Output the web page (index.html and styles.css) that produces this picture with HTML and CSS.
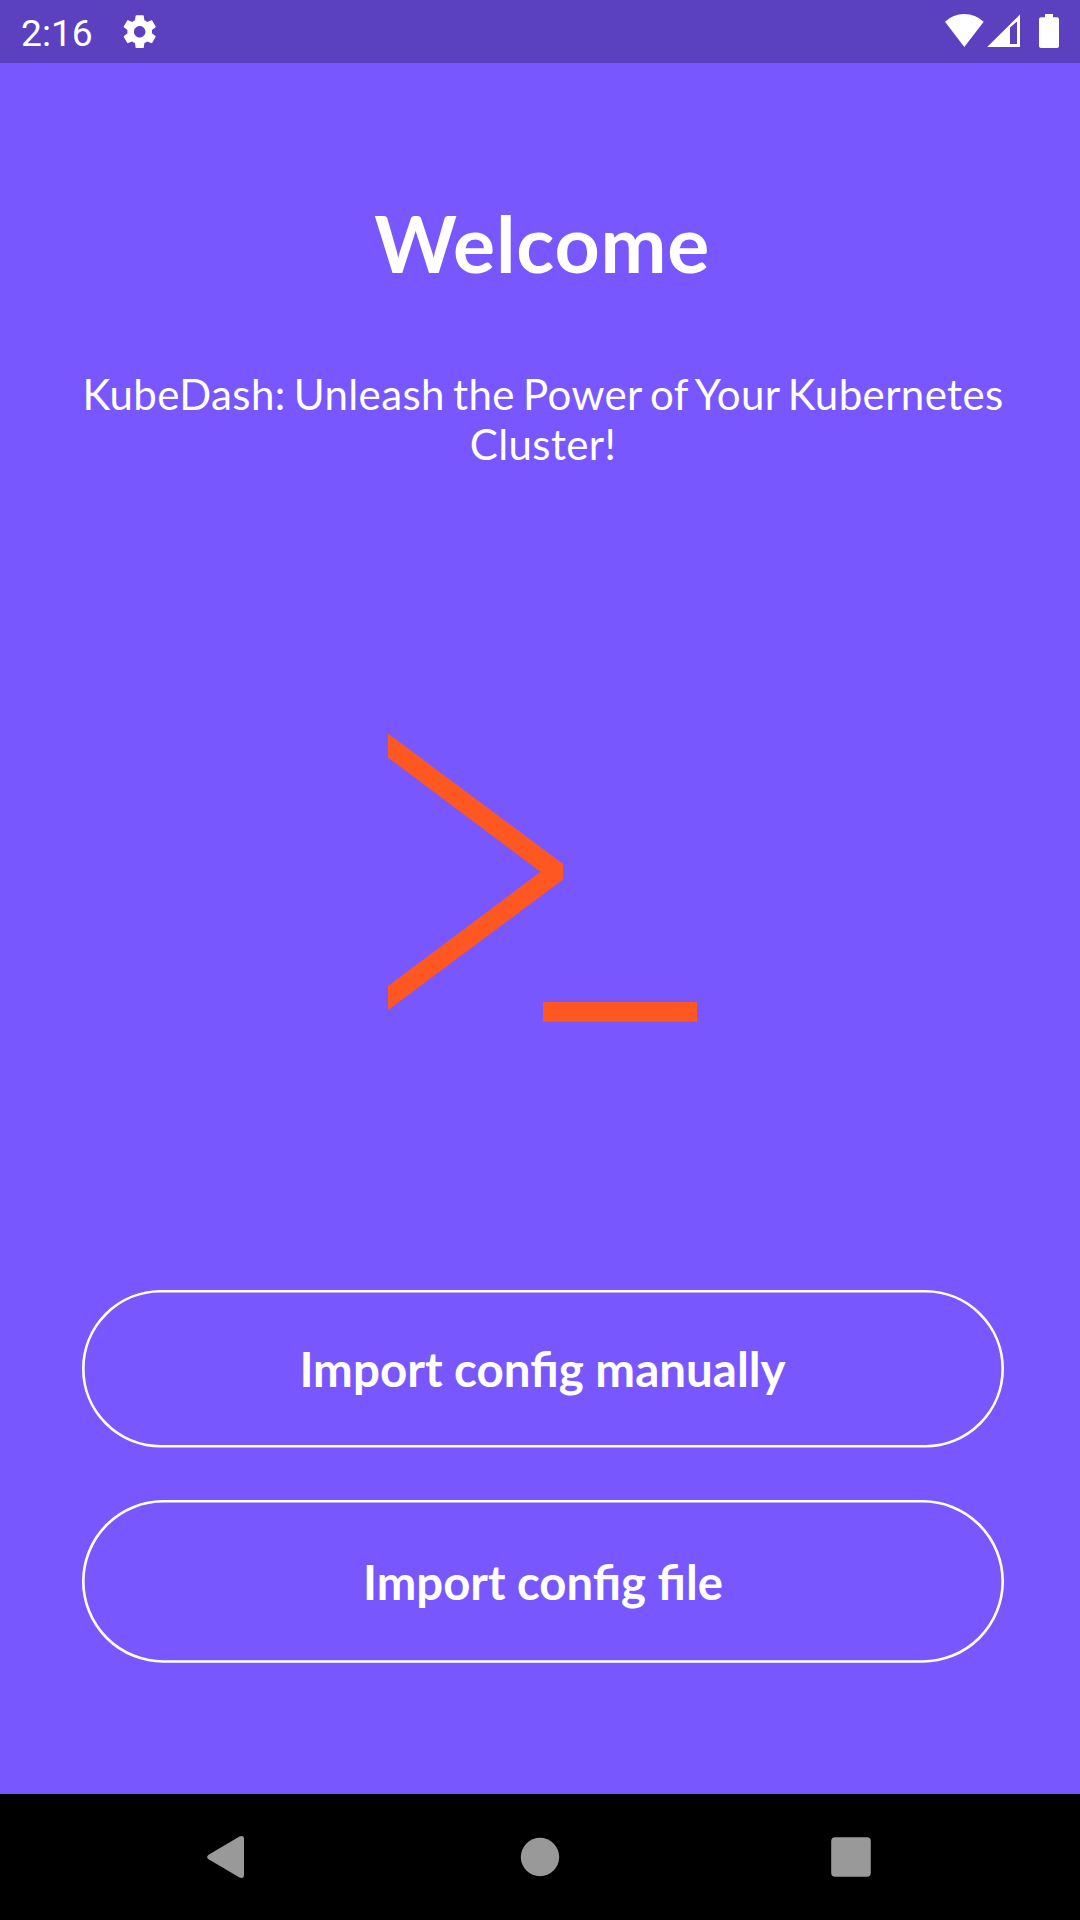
FILE: index.html
```html
<!DOCTYPE html>
<html lang="en">
<head>
<meta charset="utf-8">
<title>KubeDash</title>
<link rel="stylesheet" href="styles.css">
</head>
<body>
<div class="screen">
  <header class="status-bar">
    <span class="clock">2:16</span>
    <svg class="gear" viewBox="0 0 24 24"><path d="M19.43 12.98c.04-.32.07-.64.07-.98s-.03-.66-.07-.98l2.11-1.65c.19-.15.24-.42.12-.64l-2-3.46c-.12-.22-.39-.3-.61-.22l-2.49 1c-.52-.4-1.08-.73-1.69-.98l-.38-2.65C14.46 2.18 14.25 2 14 2h-4c-.25 0-.46.18-.49.42l-.38 2.65c-.61.25-1.17.59-1.69.98l-2.49-1c-.23-.09-.49 0-.61.22l-2 3.46c-.13.22-.07.49.12.64l2.11 1.65c-.04.32-.07.65-.07.98s.03.66.07.98l-2.11 1.65c-.19.15-.24.42-.12.64l2 3.46c.12.22.39.3.61.22l2.49-1c.52.4 1.08.73 1.69.98l.38 2.65c.03.24.24.42.49.42h4c.25 0 .46-.18.49-.42l.38-2.65c.61-.25 1.17-.59 1.69-.98l2.49 1c.23.09.49 0 .61-.22l2-3.46c.12-.22.07-.49-.12-.64l-2.11-1.65zM12 15.5c-1.93 0-3.5-1.57-3.5-3.5s1.57-3.5 3.5-3.5 3.5 1.57 3.5 3.5-1.57 3.5-3.5 3.5z"/></svg>
    <svg class="indicators" viewBox="0 0 116 36">
      <path d="M1 9.800Q9 2 20.300 2Q31.500 2 39.700 9.800L20.300 35Z"/>
      <path fill-rule="evenodd" d="M43.200 35L76 2.500V35ZM66 15.500V32H73V9.500Z"/>
      <path d="M101 2h8v3.300h4q2 0 2 2v26.700q0 2-2 2h-16q-2 0-2-2v-26.700q0-2 2-2h4z"/>
    </svg>
  </header>

  <main class="welcome">
    <h1 class="title">Welcome</h1>
    <p class="tagline">KubeDash: Unleash the Power of Your Kubernetes Cluster!</p>
    <svg class="prompt" viewBox="0 0 309 289">
      <path d="M0 .5L175 131v15.500L0 277v-24L152.500 138.800L0 24.500zM155 269h154v19.700H155z"/>
    </svg>
    <button class="action action-manual">
      <svg class="outline" viewBox="0 0 922 157.500"><rect x="1.310" y="1.310" width="919.380" height="154.880" rx="77.440"/></svg>
      <span>Import config manually</span>
    </button>
    <button class="action action-file">
      <svg class="outline" viewBox="0 0 922 162.750"><rect x="1.310" y="1.310" width="919.380" height="160.130" rx="80.060"/></svg>
      <span>Import config file</span>
    </button>
  </main>

  <nav class="nav-bar">
    <svg class="nav-icon" viewBox="0 0 44 44"><path d="M1.600 19.700L32.500 1.500Q37 -.2 37 4V40Q37 44.200 32.500 42.500L1.600 24.300Q-1.400 22 1.600 19.700Z"/></svg>
    <svg class="nav-icon" viewBox="0 0 44 44"><circle cx="22" cy="22" r="19.200"/></svg>
    <svg class="nav-icon" viewBox="0 0 44 44"><rect x="2.200" y="2.200" width="39.600" height="39.600" rx="4"/></svg>
  </nav>
</div>
</body>
</html>
```
FILE: styles.css
```css
* {
  box-sizing: border-box;
}

body {
  margin: 0;
  background: #7957ff;
}

svg {
  display: block;
  flex: none;
}

.screen {
  width: 1080px;
  height: 1920px;
  display: flex;
  flex-direction: column;
  overflow: hidden;
  background: #7957ff;
  color: #fff;
  font-family: Lato, sans-serif;
}

.status-bar {
  height: 63px;
  flex: none;
  display: flex;
  align-items: flex-start;
  padding: 12px 20px 0 21px;
  background: #5b41bf;
  fill: #fff;
}

.clock {
  width: 99.400px;
  font: 37.200px/43px Roboto, sans-serif;
}

.gear {
  width: 39.400px;
  height: 39.400px;
}

.indicators {
  width: 116px;
  height: 36px;
  margin-left: auto;
}

.welcome {
  flex: 1;
  display: flex;
  flex-direction: column;
  align-items: center;
  padding: 132px 76px 0 82px;
}

.title {
  margin: 0;
  padding-right: 1.500px;
  font-size: 78.750px;
  font-weight: 700;
  line-height: 95px;
  letter-spacing: 0.850px;
}

.tagline {
  margin: 79px 0 0;
  font-size: 42px;
  line-height: 50px;
  letter-spacing: 0.400px;
  word-spacing: -3px;
  text-align: center;
}

.prompt {
  width: 309px;
  height: 289px;
  margin: 264px 1px 0 0;
  fill: #ff5722;
}

.action {
  position: relative;
  width: 922px;
  display: flex;
  align-items: center;
  justify-content: center;
  padding: 0;
  border: 0;
  background: none;
  color: inherit;
  font: 700 47.250px/57px Lato, sans-serif;
}

.action-manual {
  height: 157.500px;
  margin-top: 268px;
  padding-right: 1px;
  font-size: 47.500px;
}

.action-file {
  height: 162.750px;
  margin-top: 52.500px;
}

.outline {
  position: absolute;
  inset: 0;
  width: 100%;
  height: 100%;
  fill: none;
  stroke: #fff;
  stroke-width: 2.625;
}

.nav-bar {
  height: 126px;
  flex: none;
  display: flex;
  align-items: center;
  justify-content: space-between;
  padding: 0 207px;
  background: #000;
  fill: #999;
}

.nav-icon {
  width: 44px;
  height: 44px;
  overflow: visible;
}
```
